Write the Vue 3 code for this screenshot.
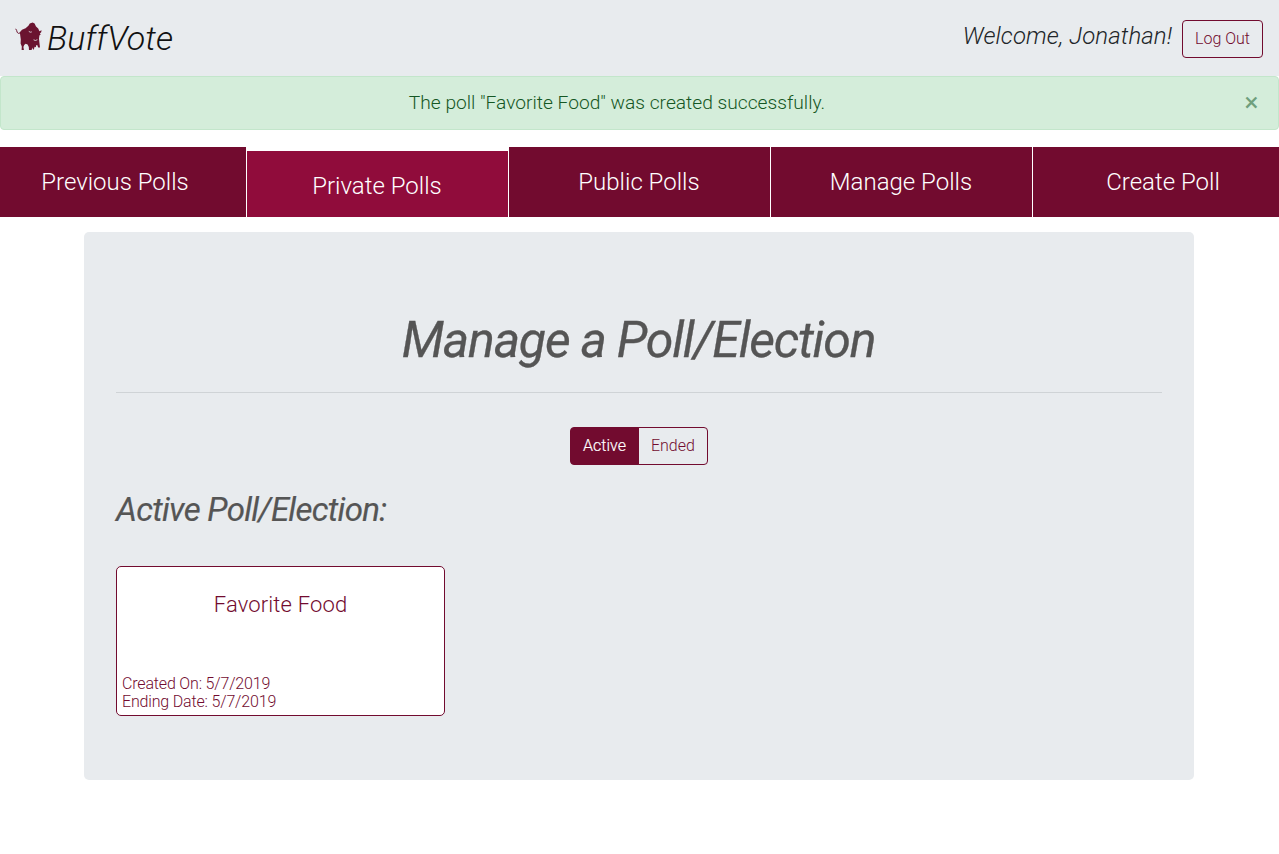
<script setup>
import { ref } from 'vue'

const tabs = ['Previous Polls', 'Private Polls', 'Public Polls', 'Manage Polls', 'Create Poll']
const activeTab = ref(1)
const filter = ref('Active')
const showAlert = ref(true)
</script>

<template>
  <div class="page">
    <header class="navbar">
      <div class="brand">
        <svg class="logo" viewBox="0 0 28 28" aria-hidden="true">
          <path d="M4.8 10.2 7 7.8l3.6-1.6 2.8-2.4 1.4-2.2L17.6.4l2 1 1.4 3.2 2.2 2 1.2 2.6 2.2-1-.4 2-1.4 1.2 1 .8-1.4 1.2-.4 3.4.4 3.8.6 4.8h-1.8l-1-2.4-1 .2-.4 2-1.2-.4-.8 3-1-.8-.6-1.4-.6 2.8H14l-.2-3.4-1.2-2.4-2-.8-1.4 1.2-.8 2 .6 3.4H6.6l.2-4-1.2-3 .2-3.8Z" />
          <path class="tail" d="M5.8 10.6 3.6 11.4 2.2 10.4 1.7 8.6.7 6.8" />
          <path class="eye" d="m13.8 9.4 1.5.8 1.5-.3M18.6 17.8l1.8.7 2-.8" />
        </svg>
        <span class="brand-name">BuffVote</span>
      </div>
      <div class="user">
        <span class="welcome">Welcome, Jonathan!</span>
        <button class="btn">Log Out</button>
      </div>
    </header>

    <div v-if="showAlert" class="alert">
      <span class="message">The poll "Favorite Food" was created successfully.</span>
      <button class="close" aria-label="Close" @click="showAlert = false">×</button>
    </div>

    <nav class="tabs">
      <button
        v-for="(tab, i) in tabs"
        :key="tab"
        class="tab"
        :class="{ active: activeTab === i }"
        @click="activeTab = i"
      >{{ tab }}</button>
    </nav>

    <main class="panel">
      <h1>Manage a Poll/Election</h1>
      <hr />
      <div class="toggle">
        <button
          v-for="name in ['Active', 'Ended']"
          :key="name"
          class="btn"
          :class="{ selected: filter === name }"
          @click="filter = name"
        >{{ name }}</button>
      </div>
      <h2>Active Poll/Election:</h2>
      <article class="card">
        <h3>Favorite Food</h3>
        <p>Created On: 5/7/2019<br />Ending Date: 5/7/2019</p>
      </article>
    </main>
  </div>
</template>

<style>
body {
  margin: 0;
  background: #fff;
  overflow: hidden;
}
</style>

<style scoped>
.page,
.page * {
  box-sizing: border-box;
}
.page {
  font-family: Roboto, sans-serif;
  font-weight: 300;
  font-size: 16px;
  line-height: 24px;
  color: #212529;
  overflow: hidden;
}
button {
  font: inherit;
  margin: 0;
  cursor: pointer;
}
.navbar {
  height: 76px;
  padding: 0 16px 0 15px;
  display: flex;
  justify-content: space-between;
  background: #e8ebee;
}
.brand {
  display: flex;
  align-items: center;
  gap: 4px;
}
.logo {
  width: 28px;
  height: 28px;
  margin-top: -4px;
  fill: #6b1430;
}
.tail {
  fill: none;
  stroke: #6b1430;
  stroke-width: 1;
}
.eye {
  fill: none;
  stroke: #e8ebee;
  stroke-width: 0.8;
}
.brand-name {
  font-size: 34px;
  line-height: 52px;
  font-style: italic;
  color: #111;
}
.user {
  display: flex;
  align-items: flex-start;
  gap: 10px;
  padding-top: 20px;
}
.welcome {
  font-size: 24px;
  line-height: 32px;
  font-style: italic;
  letter-spacing: 0.08px;
}
.btn {
  height: 38px;
  padding: 6px 12px;
  border: 1px solid #720b2f;
  border-radius: 4px;
  background: transparent;
  color: #720b2f;
}
.alert {
  height: 54px;
  display: flex;
  align-items: center;
  border: 1px solid #c3e6cb;
  border-radius: 4px;
  background: #d4edda;
  color: #155724;
}
.message {
  flex: 1;
  padding-left: 10px;
  text-align: center;
  font-size: 19.2px;
}
.close {
  width: 55px;
  padding: 0 0 2px 2px;
  border: 0;
  background: none;
  color: #6f9f7c;
  font-size: 26px;
  font-weight: 400;
}
.tabs {
  display: flex;
  height: 70px;
  margin: 17px -15px 0;
}
.tab {
  flex: 1;
  padding: 0 1px 0 0;
  border: 0;
  border-right: 1px solid #fff;
  background: #720b2f;
  color: #fff;
  font-size: 24px;
}
.tab:last-child {
  border-right: 0;
}
.tab.active {
  border-top: 4px solid #fff;
  padding-top: 4px;
  background: #900c3b;
}
.panel {
  width: 1110px;
  height: 548px;
  margin: 15px auto 0 84px;
  padding: 64px 32px;
  border-radius: 5px;
  background: #e8ebee;
}
h1,
h2,
h3,
p {
  margin: 0;
}
h1 {
  padding: 14px 1px 0 0;
  text-align: center;
  font-size: 50px;
  line-height: 60px;
  font-style: italic;
  font-weight: 400;
  letter-spacing: -1.2px;
  -webkit-text-stroke: 0.3px #555;
  color: #555;
}
hr {
  height: 1px;
  margin: 22px 0 34px;
  border: 0;
  background: #cfd3d6;
}
.toggle {
  display: flex;
  justify-content: center;
}
.toggle .btn:first-child {
  border-radius: 4px 0 0 4px;
}
.toggle .btn:last-child {
  margin-left: -1px;
  border-radius: 0 4px 4px 0;
}
.toggle .selected {
  background: #720b2f;
  color: #fff;
  -webkit-text-stroke: 0.2px #fff;
}
h2 {
  margin-top: 25px;
  font-size: 33px;
  line-height: 40px;
  font-style: italic;
  font-weight: 400;
  letter-spacing: -0.7px;
  -webkit-text-stroke: 0.2px #555;
  color: #555;
}
.card {
  display: flex;
  flex-direction: column;
  justify-content: space-between;
  width: 329px;
  height: 150px;
  margin-top: 36px;
  padding: 24px 5px 4px;
  border: 1px solid #720b2f;
  border-radius: 5px;
  background: #fff;
  color: #720b2f;
}
h3 {
  text-align: center;
  font-size: 22px;
  line-height: 28px;
  font-weight: 300;
  letter-spacing: 0.15px;
}
.card p {
  line-height: 18px;
  letter-spacing: -0.17px;
}
</style>
